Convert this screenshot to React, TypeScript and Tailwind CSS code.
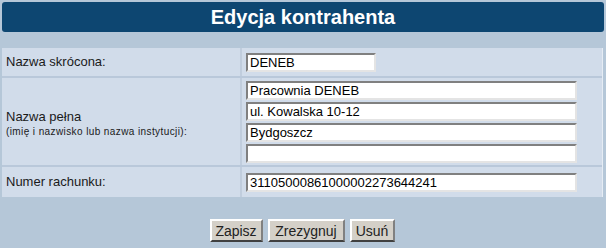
import React from 'react'

const FIELD =
  'h-[19px] bg-white border-2 border-t-[#808080] border-l-[#808080] border-b-[#e4e4e4] border-r-[#e4e4e4] px-[2px] text-[13px] leading-[15px] text-black outline-none'

function Field({ value, w = 'w-[331px]' }: { value: string; w?: string }) {
  return <input readOnly defaultValue={value} className={`${FIELD} ${w}`} />
}

function Btn({ label, w }: { label: string; w: string }) {
  return (
    <button
      className={`${w} h-[23px] bg-[#d4d0c8] text-[14px] text-[#222] border-2 border-t-white border-l-white border-b-[#404040] border-r-[#808080]`}
    >
      {label}
    </button>
  )
}

export default function App() {
  return (
    <div className="w-[606px] h-[248px] bg-[#b5c7d8] pt-[2px] px-[2px] font-['Liberation_Sans',Arial,sans-serif] text-[13px] text-[#1a1a1a]">
      {/* title bar */}
      <div className="h-[30px] rounded-[3px] bg-[#0d4671] flex items-center justify-center text-white font-bold text-[20px]">
        Edycja kontrahenta
      </div>

      {/* form */}
      <div className="mt-[16px] w-[601px] bg-[#d1dcea] border-r border-[#e6ecf4]">
        <div className="flex h-[30px] border-b-2 border-[#b9c8da]">
          <div className="w-[240px] border-r-2 border-[#c0cddd] flex items-center pl-[4px]">Nazwa skrócona:</div>
          <div className="flex items-center pl-[4px]">
            <Field value="DENEB" w="w-[130px]" />
          </div>
        </div>

        <div className="flex h-[89px] border-b-2 border-[#b9c8da]">
          <div className="w-[240px] border-r-2 border-[#c0cddd] flex flex-col justify-center pl-[4px] pt-[4px]">
            <div className="leading-[16px]">Nazwa pełna</div>
            <div className="text-[10px] leading-[14px] tracking-[0.4px]">(imię i nazwisko lub nazwa instytucji):</div>
          </div>
          <div className="flex flex-col justify-center gap-[2px] pl-[4px]">
            <Field value="Pracownia DENEB" />
            <Field value="ul. Kowalska 10-12" />
            <Field value="Bydgoszcz" />
            <Field value="" />
          </div>
        </div>

        <div className="flex h-[30px]">
          <div className="w-[240px] border-r-2 border-[#c0cddd] flex items-center pl-[4px]">Numer rachunku:</div>
          <div className="flex items-center pl-[4px]">
            <Field value="31105000861000002273644241" />
          </div>
        </div>
      </div>

      {/* actions */}
      <div className="mt-[22px] flex justify-center gap-[5px] pr-[2px]">
        <Btn label="Zapisz" w="w-[53px]" />
        <Btn label="Zrezygnuj" w="w-[77px]" />
        <Btn label="Usuń" w="w-[45px]" />
      </div>
    </div>
  )
}
